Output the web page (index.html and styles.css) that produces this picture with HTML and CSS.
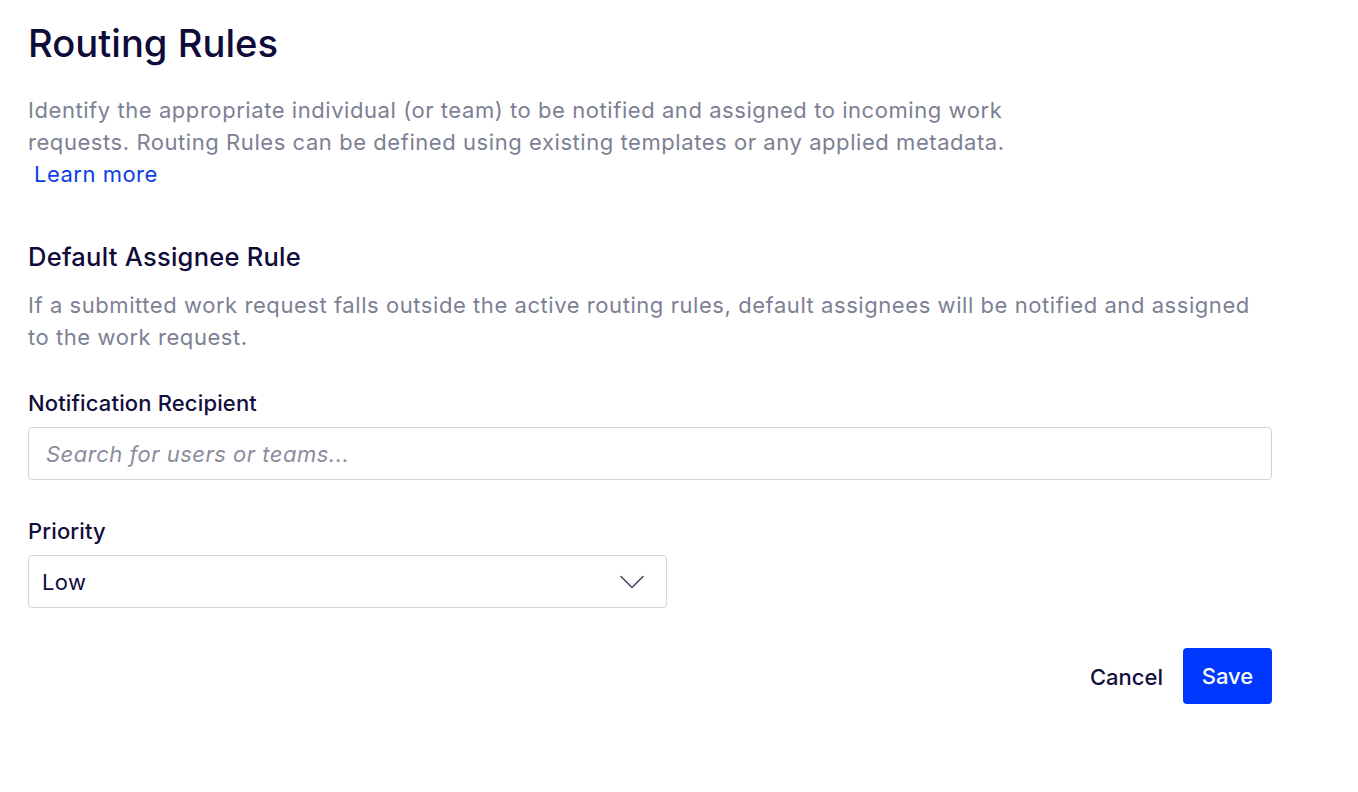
FILE: index.html
```html
<!DOCTYPE html>
<html lang="en">
<head>
<meta charset="utf-8">
<title>Routing Rules</title>
<link rel="stylesheet" href="styles.css">
</head>
<body>
<main class="page">
  <h1 class="title">Routing Rules</h1>
  <div class="intro">
    <p class="intro-text">Identify the appropriate individual (or team) to be notified and assigned to incoming work requests. Routing Rules can be defined using existing templates or any applied metadata.</p>
    <a class="learn-more" href="#">Learn more</a>
  </div>

  <section class="section">
    <h2 class="section-title">Default Assignee Rule</h2>
    <p class="section-desc">If a submitted work request falls outside the active routing rules, default assignees will be notified and assigned to the work request.</p>

    <div class="field field-recipient">
      <label class="field-label" for="recipient">Notification Recipient</label>
      <input class="text-input" id="recipient" type="text" placeholder="Search for users or teams...">
    </div>

    <div class="field field-priority">
      <label class="field-label" for="priority">Priority</label>
      <div class="select">
        <span class="select-value">Low</span>
        <svg class="chevron" width="24" height="14" viewBox="0 0 24 14" fill="none">
          <path d="M1 1.5 L12 12.5 L23 1.5" stroke="#4b4a68" stroke-width="1.6" stroke-linecap="round" stroke-linejoin="round"/>
        </svg>
      </div>
    </div>

    <div class="actions">
      <button class="btn btn-cancel" type="button">Cancel</button>
      <button class="btn btn-save" type="button">Save</button>
    </div>
  </section>
</main>
</body>
</html>
```

FILE: styles.css
```css
* { box-sizing: border-box; }

html, body {
  margin: 0;
  padding: 0;
  background: #ffffff;
}

body {
  font-family: "Inter", "Noto Sans", sans-serif;
  color: #110e3b;
}

.page {
  padding: 21px 0 0 28px;
  width: 1272px;
}

.title {
  margin: 0;
  font-size: 38.2px;
  line-height: 44px;
  font-weight: 500;
  color: #0f0c3a;
}

.intro {
  margin-top: 29px;
}

.intro-text {
  margin: 0;
  max-width: 1000px;
  font-size: 22px;
  line-height: 32px;
  color: #7d7f95;
  letter-spacing: 0.56px;
}

.learn-more {
  display: inline-block;
  margin-left: 6px;
  font-size: 22px;
  line-height: 32px;
  color: #0b3ee3;
  text-decoration: none;
  letter-spacing: 0.5px;
}

.section {
  margin-top: 51px;
  display: flex;
  flex-direction: column;
}

.section-title {
  margin: 0;
  font-size: 25.5px;
  line-height: 32px;
  font-weight: 500;
  color: #0f0c3a;
  letter-spacing: 0.25px;
}

.section-desc {
  margin: 16px 0 0;
  font-size: 22px;
  line-height: 32px;
  color: #7d7f95;
  letter-spacing: 0.56px;
}

.field {
  display: flex;
  flex-direction: column;
  gap: 10px;
}

.field-recipient { margin-top: 36px; }
.field-priority { margin-top: 37px; }

.field-label {
  font-size: 22px;
  line-height: 28px;
  font-weight: 500;
  color: #110e3b;
  letter-spacing: 0.15px;
}

.text-input {
  width: 1244px;
  height: 53px;
  border: 1px solid #d3d3da;
  border-radius: 4px;
  padding: 0 17px;
  font-family: inherit;
  font-size: 22px;
  color: #110e3b;
  outline: none;
  letter-spacing: 0.5px;
}

.text-input::placeholder {
  color: #8b8c9f;
  font-style: italic;
}

.select {
  width: 639px;
  height: 53px;
  border: 1px solid #d3d3da;
  border-radius: 4px;
  padding: 0 22px 0 13px;
  display: flex;
  align-items: center;
  justify-content: space-between;
}

.select-value {
  font-size: 22px;
  color: #110e3b;
  letter-spacing: 0.4px;
}

.chevron { display: block; }

.actions {
  margin-top: 40px;
  width: 1244px;
  display: flex;
  justify-content: flex-end;
  align-items: center;
  gap: 20px;
}

.btn {
  font-family: inherit;
  font-size: 22px;
  font-weight: 500;
  border: none;
  border-radius: 4px;
  cursor: pointer;
}

.btn-cancel {
  background: transparent;
  color: #110e3b;
  padding: 0;
  line-height: 28px;
  margin-top: 2px;
}

.btn-save {
  width: 89px;
  height: 56px;
  background: #0038ff;
  color: #ffffff;
}
```
